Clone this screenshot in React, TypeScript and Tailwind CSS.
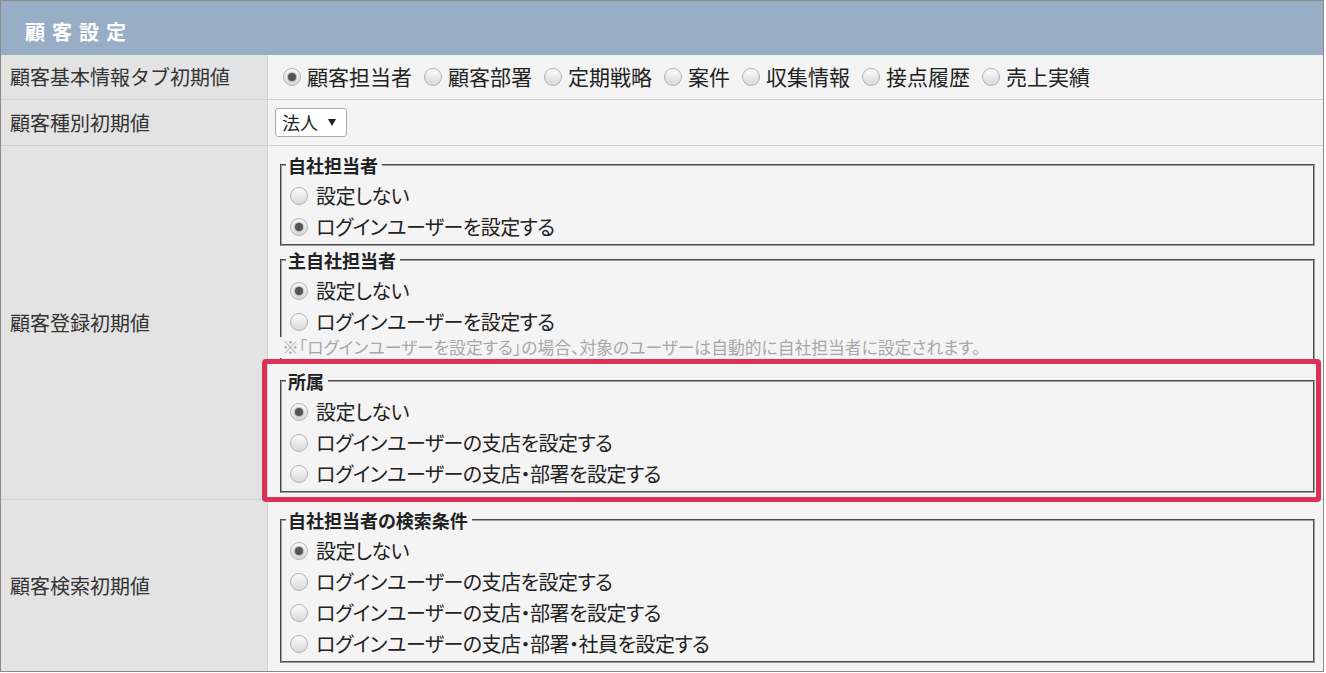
import type { ReactNode } from "react";

function Radio({ checked }: { checked?: boolean }) {
  return (
    <span className="inline-flex h-[18px] w-[18px] shrink-0 items-center justify-center rounded-full border border-[#b3b3b3] bg-linear-to-b from-[#fbfbfb] to-[#d9d9d9]">
      {checked && (
        <span className="h-[8px] w-[8px] rounded-full bg-[#545454] shadow-[0_0_1px_1px_rgba(90,90,90,0.35)]" />
      )}
    </span>
  );
}

function Option({ label, checked }: { label: string; checked?: boolean }) {
  return (
    <div className="flex h-[31px] items-center gap-[8px]">
      <Radio checked={checked} />
      <span className="tracking-[-0.5px]">{label}</span>
    </div>
  );
}

function Group({
  title,
  className = "",
  children,
}: {
  title: string;
  className?: string;
  children: ReactNode;
}) {
  return (
    <fieldset
      className={`min-w-0 border-2 border-[#a0a0a0] [border-style:groove] px-[8px] pb-[2px] pt-[5px] ${className}`}
    >
      <legend className="-ml-[4px] pl-[2px] pr-[4px] text-[18px] font-bold leading-[20px] text-[#222]">
        {title}
      </legend>
      {children}
    </fieldset>
  );
}

function Label({ children }: { children: ReactNode }) {
  return (
    <div className="flex items-center bg-[#e3e3e3] pl-[9px] text-[20px] text-[#333] [font-feature-settings:normal]">
      {children}
    </div>
  );
}

const tabs = ["顧客担当者", "顧客部署", "定期戦略", "案件", "収集情報", "接点履歴", "売上実績"];

export default function App() {
  return (
    <div className="relative h-[673px] w-[1326px] bg-white font-['Noto_Sans_CJK_JP','Noto_Sans',sans-serif] text-[#222] [font-feature-settings:'palt']">
      <div className="w-[1324px] border border-[#8a8a8a]">
        {/* Header */}
        <div className="flex h-[54px] items-center bg-[#98aec7] pl-[24px] pt-[8px]">
          <span className="text-[20px] font-bold tracking-[7px] text-white">顧客設定</span>
        </div>

        {/* 顧客基本情報タブ初期値 */}
        <div className="grid h-[45px] grid-cols-[266px_1fr] border-b border-[#cfcfcf]">
          <Label>顧客基本情報タブ初期値</Label>
          <div className="flex items-center border-l border-[#d2d2d2] bg-[#f4f4f4] pl-[15px] text-[21px]">
            {tabs.map((t, i) => (
              <div key={t} className="mr-[12px] flex items-center gap-[6px]">
                <Radio checked={i === 0} />
                <span>{t}</span>
              </div>
            ))}
          </div>
        </div>

        {/* 顧客種別初期値 */}
        <div className="grid h-[46px] grid-cols-[266px_1fr] border-b border-[#cfcfcf]">
          <Label>顧客種別初期値</Label>
          <div className="flex items-center border-l border-[#d2d2d2] bg-[#f4f4f4] pl-[7px]">
            <div className="flex h-[29px] w-[72px] items-center rounded-[3px] border border-[#adadad] bg-white pl-[6px] text-[18px]">
              <span>法人</span>
              <svg width="8" height="7" viewBox="0 0 8 7" className="ml-[10px]">
                <path d="M0 0 H8 L4 7 Z" fill="#222" />
              </svg>
            </div>
          </div>
        </div>

        {/* 顧客登録初期値 */}
        <div className="grid h-[354px] grid-cols-[266px_1fr] border-b border-[#cfcfcf]">
          <Label>顧客登録初期値</Label>
          <div className="border-l border-[#d2d2d2] bg-[#f4f4f4] pl-[12px] pr-[8px] pt-[9px] text-[20px]">
            <Group title="自社担当者">
              <Option label="設定しない" />
              <Option label="ログインユーザーを設定する" checked />
            </Group>
            <Group title="主自社担当者" className="mt-[4px]">
              <Option label="設定しない" checked />
              <Option label="ログインユーザーを設定する" />
              <p className="relative -ml-[10px] bg-[#f4f4f4] pl-[2px] text-[16.8px] leading-[21px] text-[#a8a8a8]">
                ※「ログインユーザーを設定する」の場合、対象のユーザーは自動的に自社担当者に設定されます。
              </p>
            </Group>
            <Group title="所属" className="mt-[9px] pb-0">
              <Option label="設定しない" checked />
              <Option label="ログインユーザーの支店を設定する" />
              <Option label="ログインユーザーの支店・部署を設定する" />
            </Group>
          </div>
        </div>

        {/* 顧客検索初期値 */}
        <div className="grid h-[171px] grid-cols-[266px_1fr]">
          <Label>顧客検索初期値</Label>
          <div className="border-l border-[#d2d2d2] bg-[#f4f4f4] pl-[12px] pr-[8px] pt-[10px] text-[20px]">
            <Group title="自社担当者の検索条件" className="pb-[1px]">
              <Option label="設定しない" checked />
              <Option label="ログインユーザーの支店を設定する" />
              <Option label="ログインユーザーの支店・部署を設定する" />
              <Option label="ログインユーザーの支店・部署・社員を設定する" />
            </Group>
          </div>
        </div>
      </div>

      {/* highlight annotation */}
      <div className="pointer-events-none absolute left-[262px] top-[359px] h-[143px] w-[1059px] rounded-[4px] border-[5px] border-[#da3256]" />
    </div>
  );
}
